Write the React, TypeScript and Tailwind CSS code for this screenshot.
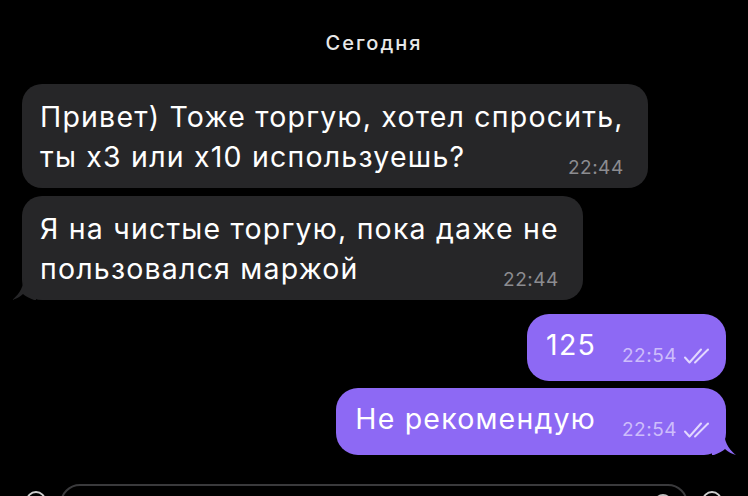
import React from "react";

const font = { fontFamily: "Inter, 'Noto Sans', sans-serif" };

function Checks() {
  return (
    <svg width="26" height="16" viewBox="0 0 26 16" fill="none" stroke="#e2d8fe" strokeWidth="2" strokeLinecap="round" strokeLinejoin="round">
      <path d="M1 9.5l4.5 5L17 1.5" />
      <path d="M11 14.5L24 1.5" />
    </svg>
  );
}

function LeftTail() {
  return (
    <svg className="absolute -left-[10px] bottom-0" width="24" height="22" viewBox="0 0 24 22">
      <path d="M12 0 L24 0 L24 22 L22 22 C17 20 13 18 11 16 C8 19 4 21 0 22 C5 18 11 12 12 0 Z" fill="#262628" />
    </svg>
  );
}

function RightTail() {
  return (
    <svg className="absolute -right-[10px] bottom-0" width="24" height="22" viewBox="0 0 24 22">
      <path d="M12 0 L0 0 L0 22 L2 22 C7 20 11 18 13 16 C16 19 20 21 24 22 C19 18 13 12 12 0 Z" fill="#8d69f4" />
    </svg>
  );
}

function Incoming({ lines, time, tail }: { lines: string[]; time: string; tail?: boolean }) {
  const last = lines[lines.length - 1];
  return (
    <div className="relative w-fit rounded-[20px] bg-[#262628] pl-[18px] pr-[24px] pt-[13px] pb-[11px] text-[28.5px] leading-[40px] tracking-[1.2px] text-white">
      {lines.slice(0, -1).map((l) => (
        <div key={l}>{l}</div>
      ))}
      <div className="flex items-end justify-between">
        <span>{last}</span>
        <span className="mb-[-3px] ml-6 text-[19px] leading-[24px] tracking-[0.5px] text-[#8c8c90]">{time}</span>
      </div>
      {tail ? <LeftTail /> : null}
    </div>
  );
}

function Outgoing({ text, time, tail }: { text: string; time: string; tail?: boolean }) {
  return (
    <div className="relative ml-auto flex w-fit items-center rounded-[22px] bg-[#8d69f4] pl-[19px] pr-[16px] pt-[10px] pb-[15px] text-[28.5px] leading-[40px] tracking-[1.2px] text-white">
      <span>{text}</span>
      <span className="ml-[26px] mt-[22px] flex items-center gap-[7px] text-[19px] leading-[20px] tracking-[0.5px] text-[#cdbdfb]">
        {time}
        <Checks />
      </span>
      {tail ? <RightTail /> : null}
    </div>
  );
}

export default function App() {
  return (
    <div className="h-[496px] w-[748px] overflow-hidden bg-black" style={font}>
      <div className="pt-[29px] text-center text-[20px] font-medium leading-[28px] tracking-[2px] text-[#e8e8e8]">Сегодня</div>
      <div className="mt-[27px] flex flex-col px-[22px]">
        <Incoming lines={["Привет) Тоже торгую, хотел спросить,", "ты x3 или x10 используешь?"]} time="22:44" />
        <div className="mt-[8px]">
          <Incoming lines={["Я на чистые торгую, пока даже не", "пользовался маржой"]} time="22:44" tail />
        </div>
        <div className="mt-[14px]">
          <Outgoing text="125" time="22:54" />
        </div>
        <div className="mt-[7px]">
          <Outgoing text="Не рекомендую" time="22:54" tail />
        </div>
      </div>
      <div className="mt-[29px] flex items-start gap-[14px] px-[26px]">
        <div className="mt-[7px] h-[20px] w-[20px] shrink-0 rounded-full border-2 border-[#cfcfcf]" />
        <div className="relative h-[40px] flex-1 rounded-[20px] border-2 border-[#3a3a3c]">
          <div className="absolute right-[14px] top-[8px] h-[18px] w-[18px] rounded-full border-2 border-[#bdbdbd]" />
        </div>
        <div className="mt-[7px] h-[20px] w-[20px] shrink-0 rounded-full border-2 border-[#cfcfcf]" />
      </div>
    </div>
  );
}
